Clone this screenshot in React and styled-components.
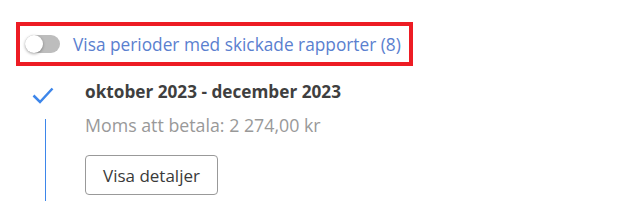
import styled, { createGlobalStyle } from "styled-components";

const GlobalStyle = createGlobalStyle`
    body {
        margin: 0;
        background: #ffffff;
        font-family: "Open Sans", "Liberation Sans", sans-serif;
    }
`;

export default function App() {
    return (
        <>
            <GlobalStyle />
            <Page>
                <FilterBox>
                    <Track>
                        <Thumb />
                    </Track>
                    <FilterLabel>Visa perioder med skickade rapporter (8)</FilterLabel>
                </FilterBox>
                <Period>
                    <Rail>
                        <svg width="22" height="17" viewBox="0 0 22 17">
                            <path d="M1.5 8.5 L8 15 L20.5 1.5" fill="none" stroke="#3d86ea" strokeWidth="2.5" />
                        </svg>
                        <Line />
                    </Rail>
                    <Content>
                        <PeriodTitle>oktober 2023 - december 2023</PeriodTitle>
                        <Amount>Moms att betala: 2 274,00 kr</Amount>
                        <Button>Visa detaljer</Button>
                    </Content>
                </Period>
            </Page>
        </>
    );
}

const Page = styled.div`
    padding: 22px 0 0 16px;
`;

const FilterBox = styled.div`
    display: inline-flex;
    align-items: center;
    gap: 13px;
    box-sizing: border-box;
    width: 397px;
    height: 44px;
    border: 4px solid #ed1c24;
    padding: 0 0 0 5px;
`;

const Track = styled.div`
    position: relative;
    width: 35px;
    height: 18px;
    border-radius: 9px;
    background: #bdbdbd;
`;

const Thumb = styled.div`
    position: absolute;
    left: 0;
    top: 0;
    width: 18px;
    height: 18px;
    border-radius: 50%;
    background: #ffffff;
    box-shadow: 0 1px 3px rgba(0, 0, 0, 0.35);
`;

const FilterLabel = styled.span`
    font-size: 17.3px;
    color: #5a80cf;
    white-space: nowrap;
`;

const Period = styled.div`
    display: flex;
    margin-top: 21px;
    padding-left: 16px;
`;

const Rail = styled.div`
    width: 53px;
    display: flex;
    flex-direction: column;
    align-items: flex-start;
`;

const Line = styled.div`
    width: 1px;
    height: 82px;
    margin: 15px 0 0 13px;
    background: #3d86ea;
`;

const Content = styled.div`
    display: flex;
    flex-direction: column;
    align-items: flex-start;
`;

const PeriodTitle = styled.div`
    font-size: 17.2px;
    font-weight: 700;
    color: #3f3f3f;
    line-height: 22px;
    margin-top: -6px;
`;

const Amount = styled.div`
    font-size: 17.8px;
    color: #999999;
    line-height: 24px;
    margin-top: 10px;
`;

const Button = styled.button`
    margin-top: 18px;
    height: 40px;
    padding: 0 17px;
    border: 1px solid #999999;
    border-radius: 4px;
    background: #ffffff;
    font-family: "Open Sans", "Liberation Sans", sans-serif;
    font-size: 17px;
    color: #3a3a3a;
`;
